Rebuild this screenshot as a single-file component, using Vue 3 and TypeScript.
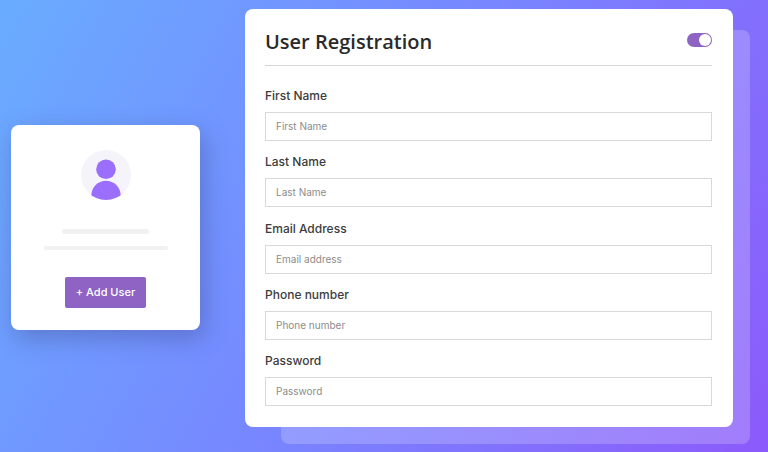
<script setup lang="ts">
import { ref } from 'vue'

interface Field {
  id: string
  label: string
  placeholder: string
  type: string
}

const fields: Field[] = [
  { id: 'first-name', label: 'First Name', placeholder: 'First Name', type: 'text' },
  { id: 'last-name', label: 'Last Name', placeholder: 'Last Name', type: 'text' },
  { id: 'email', label: 'Email Address', placeholder: 'Email address', type: 'email' },
  { id: 'phone', label: 'Phone number', placeholder: 'Phone number', type: 'tel' },
  { id: 'password', label: 'Password', placeholder: 'Password', type: 'password' },
]

const values = ref<Record<string, string>>({})
const enabled = ref<boolean>(true)
</script>

<template>
  <main class="stage">
    <aside class="card">
      <svg class="avatar" viewBox="0 0 50 50" aria-hidden="true">
        <defs>
          <clipPath id="avatar-clip"><circle cx="25" cy="25" r="25" /></clipPath>
        </defs>
        <circle cx="25" cy="25" r="25" fill="#f5f4fa" />
        <g clip-path="url(#avatar-clip)" fill="#9b6ffb">
          <circle cx="25" cy="19.3" r="9.8" />
          <path d="M10.3 52V45.5C10.3 37.4 16.9 30.8 25 30.8S39.7 37.4 39.7 45.5V52Z" />
        </g>
      </svg>
      <span class="line line-short"></span>
      <span class="line line-long"></span>
      <button class="add" type="button">+ Add User</button>
    </aside>

    <div class="panel-wrap">
      <form class="panel" @submit.prevent>
        <header class="head">
          <h1 id="form-title" class="title">User Registration</h1>
          <input v-model="enabled" class="toggle" type="checkbox" role="switch" aria-labelledby="form-title" />
        </header>
        <div class="fields">
          <div v-for="field in fields" :key="field.id" class="field">
            <label class="label" :for="field.id">{{ field.label }}</label>
            <input
              :id="field.id"
              v-model="values[field.id]"
              class="input"
              :type="field.type"
              :placeholder="field.placeholder"
              autocomplete="off"
            />
          </div>
        </div>
      </form>
    </div>
  </main>
</template>

<style>
body {
  margin: 0;
}
</style>

<style scoped>
.stage {
  box-sizing: border-box;
  min-height: 100vh;
  display: grid;
  grid-template-columns: 189px minmax(0, 1fr);
  column-gap: 45px;
  align-items: center;
  padding: 0 35px 0 11px;
  background: linear-gradient(118deg, #69acff 0%, #7787ff 48%, #8c5afb 100%);
  font-family: Inter, "Liberation Sans", sans-serif;
}

.card {
  display: flex;
  flex-direction: column;
  align-items: center;
  margin-top: 3px;
  padding: 25px 0 22px;
  background: #fff;
  border-radius: 8px;
  box-shadow: 4px 8px 24px rgba(60, 70, 130, 0.4);
}

.avatar {
  width: 50px;
  height: 50px;
  margin-bottom: 29px;
}

.line {
  background: #f1f1f1;
  border-radius: 3px;
}

.line-short {
  width: 87px;
  height: 5px;
  margin-bottom: 12px;
}

.line-long {
  width: 124px;
  height: 4px;
  margin-bottom: 27px;
}

.add {
  height: 31px;
  padding: 0 11px 2px;
  border: 0;
  border-radius: 2px;
  background: #8e63c3;
  color: #fff;
  font: 500 11px/16px Inter, "Liberation Sans", sans-serif;
  white-space: nowrap;
  cursor: pointer;
}

.panel-wrap {
  position: relative;
  z-index: 0;
  align-self: stretch;
  display: flex;
  margin: 9px 0 25px;
}

.panel-wrap::before {
  content: "";
  position: absolute;
  z-index: -1;
  inset: 21px -17px -17px 36px;
  border-radius: 8px;
  background: rgba(255, 255, 255, 0.2);
}

.panel {
  box-sizing: border-box;
  flex: 1;
  min-width: 0;
  display: flex;
  flex-direction: column;
  padding: 20px 21px 21px 20px;
  background: #fff;
  border-radius: 8px;
}

.head {
  display: flex;
  align-items: flex-end;
  justify-content: space-between;
  padding-bottom: 11px;
  margin-bottom: 20px;
  border-bottom: 1px solid #d6d6d6;
}

.title {
  margin: 0;
  color: #2a2a2a;
  font: 600 20px/25px "Open Sans", "Noto Sans", sans-serif;
}

.toggle {
  appearance: none;
  display: flex;
  justify-content: flex-start;
  align-items: center;
  box-sizing: border-box;
  width: 25px;
  height: 14px;
  margin: 0 0 7px;
  padding: 1px;
  border-radius: 7px;
  background: #c9c9c9;
  cursor: pointer;
}

.toggle::before {
  content: "";
  width: 12px;
  height: 12px;
  border-radius: 50%;
  background: #fff;
}

.toggle:checked {
  justify-content: flex-end;
  background: #8e63c3;
}

.fields {
  flex: 1;
  display: flex;
  flex-direction: column;
  justify-content: space-between;
}

.field {
  display: flex;
  flex-direction: column;
  gap: 7px;
}

.label {
  color: #3c3c3c;
  font-size: 12px;
  font-weight: 500;
  line-height: 19px;
}

.input {
  box-sizing: border-box;
  width: 100%;
  height: 29px;
  padding: 0 10px 1px;
  border: 1px solid #d9d9d9;
  border-radius: 0;
  background: #fff;
  color: #3c3c3c;
  font: 400 10px/14px Inter, "Liberation Sans", sans-serif;
}

.input::placeholder {
  color: #8c8c8c;
  opacity: 1;
}
</style>
